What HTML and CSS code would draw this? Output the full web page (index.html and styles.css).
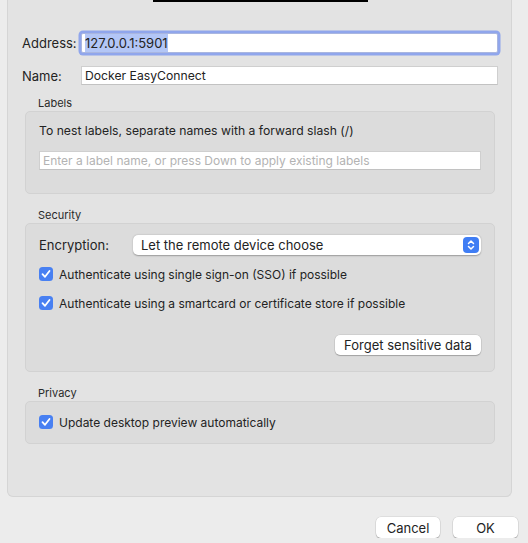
FILE: index.html
```html
<!DOCTYPE html>
<html lang="en">
<head>
  <meta charset="UTF-8">
  <title>Edit Connection</title>
  <link rel="stylesheet" href="styles.css">
</head>
<body>

<div class="sheet">
  <div class="titlebar"></div>

  <div class="field-row address-row">
    <label class="field-label">Address:</label>
    <div class="text-input focused"><span class="selected">127.0.0.1:5901</span></div>
  </div>
  <div class="field-row name-row">
    <label class="field-label">Name:</label>
    <div class="text-input name-input">Docker EasyConnect</div>
  </div>

  <div class="group">
    <div class="group-title">Labels</div>
    <div class="group-box labels-box">
      <p class="hint">To nest labels, separate names with a forward slash (/)</p>
      <div class="text-input placeholder">Enter a label name, or press Down to apply existing labels</div>
    </div>
  </div>

  <div class="group">
    <div class="group-title">Security</div>
    <div class="group-box security-box">
      <div class="select-row">
        <span class="select-label">Encryption:</span>
        <div class="popup">
          <span>Let the remote device choose</span>
          <span class="stepper">
            <svg width="16" height="16" viewBox="0 0 16 16">
              <path d="M5.5 6.5 L8 4 L10.5 6.5 M5.5 9.5 L8 12 L10.5 9.5" fill="none" stroke="#fff" stroke-width="1.5" stroke-linecap="round" stroke-linejoin="round"/>
            </svg>
          </span>
        </div>
      </div>
      <div class="check-row">
        <span class="checkbox"><svg width="14" height="14" viewBox="0 0 14 14"><path d="M3.5 7.2 L6 9.8 L10.5 4" fill="none" stroke="#fff" stroke-width="1.8" stroke-linecap="round" stroke-linejoin="round"/></svg></span>
        <span>Authenticate using single sign-on (SSO) if possible</span>
      </div>
      <div class="check-row second">
        <span class="checkbox"><svg width="14" height="14" viewBox="0 0 14 14"><path d="M3.5 7.2 L6 9.8 L10.5 4" fill="none" stroke="#fff" stroke-width="1.8" stroke-linecap="round" stroke-linejoin="round"/></svg></span>
        <span>Authenticate using a smartcard or certificate store if possible</span>
      </div>
      <div class="button-row">
        <button class="push-btn forget-btn">Forget sensitive data</button>
      </div>
    </div>
  </div>

  <div class="group">
    <div class="group-title">Privacy</div>
    <div class="group-box privacy-box">
      <div class="check-row">
        <span class="checkbox"><svg width="14" height="14" viewBox="0 0 14 14"><path d="M3.5 7.2 L6 9.8 L10.5 4" fill="none" stroke="#fff" stroke-width="1.8" stroke-linecap="round" stroke-linejoin="round"/></svg></span>
        <span>Update desktop preview automatically</span>
      </div>
    </div>
  </div>
</div>

<div class="actions">
  <button class="push-btn cancel-btn">Cancel</button>
  <button class="push-btn ok-btn">OK</button>
</div>

</body>
</html>
```

FILE: styles.css
```css
* { box-sizing: border-box; }
body {
  margin: 0;
  background: #ececec;
  font-family: Inter, "Noto Sans", sans-serif;
  font-size: 13px;
  color: #232323;
}

/* main sheet */
.sheet {
  margin-left: 7px;
  width: 505px;
  height: 497px;
  padding: 0 13px 0 14px;
  background: #e3e3e3;
  border: 1px solid #d5d5d5;
  border-top: none;
  border-radius: 0 0 6px 6px;
}
.titlebar {
  width: 215px;
  height: 2px;
  margin: 0 auto;
  background: #000;
}

/* address / name */
.field-row {
  display: flex;
  align-items: center;
  height: 20px;
}
.address-row { margin-top: 31px; }
.name-row { margin-top: 13px; height: 19px; }
.field-label {
  width: 59px;
  flex-shrink: 0;
}
.text-input {
  flex: 1;
  height: 100%;
  background: #fff;
  border: 1px solid #cfcfcf;
  border-bottom-color: #c2c2c2;
  padding: 0 3px;
  line-height: 18px;
  white-space: nowrap;
  overflow: hidden;
}
.text-input.focused {
  border-color: #a9b6e0;
  border-radius: 2px;
  box-shadow: 0 0 0 2.5px #90a6ec;
}
.name-input {
  font-size: 12.2px;
  line-height: 17px;
}
.selected {
  background: #b3c6f6;
  padding: 1px 0;
}

/* groups */
.group { margin: 11px 3px 0 3px; }
.group + .group { margin-top: 14px; }
.group-title {
  font-size: 11px;
  line-height: 14px;
  padding-left: 13px;
  margin-bottom: 1px;
  color: #2a2a2a;
}
.group-box {
  background: #dcdcdc;
  border: 1px solid #d2d2d2;
  border-radius: 5px;
  padding: 11px 13px 23px 13px;
}
.hint {
  margin: 0;
  font-size: 12.2px;
  line-height: 16px;
}
.labels-box .text-input {
  height: 19px;
  margin-top: 12px;
  font-size: 12px;
  color: #b3b3b3;
  line-height: 17px;
}

/* security */
.security-box { padding-bottom: 16px; }
.select-row {
  display: flex;
  align-items: center;
  height: 20px;
}
.select-label {
  width: 94px;
  flex-shrink: 0;
}
.popup {
  flex: 1;
  height: 20px;
  display: flex;
  align-items: center;
  justify-content: space-between;
  padding: 0 2px 0 8px;
  background: #fff;
  border-radius: 5px;
  box-shadow: 0 0.5px 1.5px rgba(0,0,0,0.3);
}
.stepper {
  width: 16px;
  height: 16px;
  border-radius: 4px;
  background: #3f7df4;
  display: flex;
}
.check-row {
  display: flex;
  align-items: center;
  gap: 6px;
  height: 16px;
  margin-top: 11px;
  font-size: 12px;
}
.check-row.second { margin-top: 13px; }
.checkbox {
  width: 14px;
  height: 14px;
  border-radius: 3.5px;
  background: #4880f2;
  display: flex;
}
.button-row {
  display: flex;
  justify-content: flex-end;
  margin-top: 24px;
}
.push-btn {
  font-family: inherit;
  font-size: 13px;
  color: #232323;
  background: #fff;
  border: none;
  border-radius: 5px;
  box-shadow: 0 0 0 0.5px rgba(0,0,0,0.12), 0 1px 1px rgba(0,0,0,0.22);
  height: 20px;
  padding: 0;
  cursor: pointer;
}
.forget-btn { width: 146px; }

/* privacy */
.privacy-box { padding: 12px 13px 13px 13px; }
.privacy-box .check-row { margin-top: 0; }

/* bottom buttons */
.actions {
  display: flex;
  justify-content: flex-end;
  gap: 13px;
  margin-top: 20px;
  padding-right: 10px;
}
.actions .push-btn { height: 21px; }
.cancel-btn { width: 64px; }
.ok-btn { width: 65px; }
```
